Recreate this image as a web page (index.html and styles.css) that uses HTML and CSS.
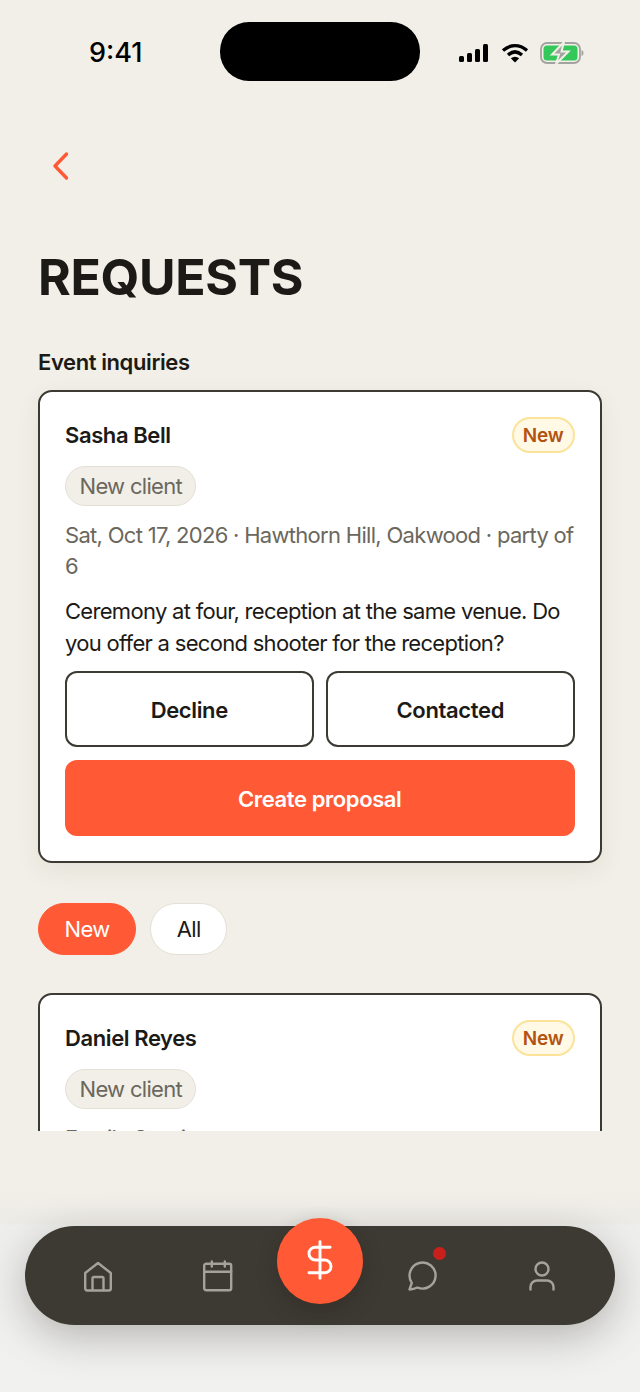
FILE: index.html
```html
<!DOCTYPE html>
<html lang="en">
<head>
<meta charset="utf-8">
<title>Requests</title>
<link rel="stylesheet" href="styles.css">
</head>
<body>
<div class="screen">
  <header class="status">
    <span class="time">9:41</span>
    <span class="island"></span>
    <span class="status-icons">
      <svg width="32" height="20" viewBox="0 0 32 20"><rect x="1" y="13" width="5" height="6" rx="1.5"/><rect x="9" y="10" width="5" height="9" rx="1.5"/><rect x="17" y="6" width="5" height="13" rx="1.5"/><rect x="25" y="1" width="5" height="18" rx="1.5"/></svg>
      <svg width="28" height="20" viewBox="0 0 28 20" fill="none" stroke="#000" stroke-width="3.4"><path d="M2 7.5C9.500 1 18.500 1 26 7.5"/><path d="M7 12C11.500 8 16.500 8 21 12"/><path d="M14 19.500L9.800 15.200C12.500 13.200 15.500 13.200 18.200 15.200Z" fill="#000" stroke="none"/></svg>
      <svg width="44" height="22" viewBox="0 0 44 22"><rect x="1" y="1" width="39" height="20" rx="6" fill="none" stroke="#a3a3a0" stroke-width="1.8"/><rect x="3.500" y="3.500" width="34" height="15" rx="3.500" fill="#34c759"/><path d="M41.500 8v6c1.500-.5 2-1.800 2-3s-.5-2.500-2-3z" fill="#a3a3a0"/><path d="M24 0L12 12.500H19L16 22L28.500 9.500H21.500Z" fill="#a3a3a0" stroke="#f2efe8" stroke-width="2"/></svg>
    </span>
  </header>

  <a class="back" href="#" aria-label="Back">
    <svg width="20" height="30" viewBox="0 0 20 30" fill="none" stroke="#ff5a35" stroke-width="3.4" stroke-linecap="round" stroke-linejoin="round"><path d="M15.500 3L4 15l11.500 12"/></svg>
  </a>

  <main class="content">
    <h1 class="title">REQUESTS</h1>
    <h2 class="section">Event inquiries</h2>

    <article class="card card-main">
      <div class="card-head">
        <span class="name">Sasha Bell</span>
        <span class="badge">New</span>
      </div>
      <span class="tag">New client</span>
      <p class="meta">Sat, Oct 17, 2026 · Hawthorn Hill, Oakwood · party of 6</p>
      <p class="message">Ceremony at four, reception at the same venue. Do you offer a second shooter for the reception?</p>
      <div class="actions">
        <button class="btn">Decline</button>
        <button class="btn">Contacted</button>
      </div>
      <button class="primary">Create proposal</button>
    </article>

    <div class="filters">
      <button class="chip chip-on">New</button>
      <button class="chip">All</button>
    </div>

    <div class="clip">
      <article class="card">
        <div class="card-head">
          <span class="name">Daniel Reyes</span>
          <span class="badge">New</span>
        </div>
        <span class="tag">New client</span>
        <p class="meta">Family Session</p>
      </article>
    </div>
  </main>

  <div class="fade"></div>
  <nav class="tabbar">
    <div class="tab-group">
      <svg class="tab" width="34" height="34" viewBox="0 0 34 34" fill="none" stroke="#a5a29b" stroke-width="2.4" stroke-linejoin="round"><path d="M4.200 13.500L17 3.500 29.800 13.500V29a2 2 0 0 1-2 2H6.200a2 2 0 0 1-2-2Z" transform="translate(0 .5)"/><path d="M11.500 31V19.500a1.500 1.500 0 0 1 1.500-1.500H21a1.500 1.500 0 0 1 1.500 1.500V31"/></svg>
      <svg class="tab" width="34" height="34" viewBox="0 0 34 34" fill="none" stroke="#a5a29b" stroke-width="2.4" stroke-linecap="round" stroke-linejoin="round"><rect x="3.200" y="4.800" width="27" height="26.500" rx="2"/><path d="M3.200 12.800H30.200M10.800 2.500V7.500M23.800 2.500V7.500"/></svg>
    </div>
    <div class="tab-group tab-group-right">
      <span class="tab chat">
        <svg width="34" height="34" viewBox="0 0 34 34" fill="none" stroke="#a5a29b" stroke-width="2.4" stroke-linecap="round" stroke-linejoin="round"><path d="M3.500 30.500L5.800 23.800A13 13 0 1 1 11.500 28.500C8.500 29.800 6 30.300 3.500 30.500Z"/></svg>
        <span class="dot"></span>
      </span>
      <svg class="tab" width="34" height="34" viewBox="0 0 34 34" fill="none" stroke="#a5a29b" stroke-width="2.4" stroke-linecap="round"><circle cx="17" cy="10" r="6.500"/><path d="M5.500 30.500V28A6.500 6.500 0 0 1 12 21.500H22A6.500 6.500 0 0 1 28.500 28V30.500"/></svg>
    </div>
  </nav>
  <button class="fab" aria-label="Payments">
    <svg width="44" height="44" viewBox="0 0 24 24" fill="none" stroke="#fff" stroke-width="1.6" stroke-linecap="round" stroke-linejoin="round"><path d="M12 2V22"/><path d="M17.500 5H9.500a3.500 3.500 0 0 0 0 7h5a3.500 3.500 0 0 1 0 7H6"/></svg>
  </button>
</div>
</body>
</html>
```

FILE: styles.css
```css
* { box-sizing: border-box; }
html, body { margin: 0; padding: 0; }
body { font-family: Inter, "Liberation Sans", sans-serif; background: #f2efe8; color: #1c1a16; }
button { font-family: inherit; cursor: pointer; }
p, h1, h2 { margin: 0; }

.screen { position: relative; width: 640px; height: 1392px; overflow: hidden; background: #f2efe8; }

.status { position: relative; height: 81px; padding-top: 22px; }
.time { position: absolute; left: 89px; top: 36px; font-size: 27px; line-height: 34px; font-weight: 500; color: #000; }
.island { position: absolute; left: 220px; top: 22px; width: 200px; height: 59px; border-radius: 29px; background: #000; }
.status-icons { position: absolute; left: 458px; top: 42px; display: flex; align-items: center; gap: 11px; }
.status-icons svg { display: block; }

.back { display: block; width: 20px; height: 30px; margin: 70px 0 0 51px; }
.back svg { display: block; }

.content { padding: 0 38px; }
.title { margin-top: 67px; font-size: 50px; line-height: 58px; font-weight: 700; letter-spacing: -0.35px; color: #1c1a16; }
.section { margin-top: 41px; font-size: 22px; line-height: 30px; font-weight: 600; letter-spacing: -0.4px; }

.card { background: #fff; border: 2px solid #3d3a33; border-radius: 14px; padding: 25px 25.5px 25px 25px; }
.card-main { margin-top: 13px; height: 473px; box-shadow: 0 8px 24px rgba(60, 50, 30, 0.07); }
.card-head { display: flex; justify-content: space-between; align-items: center; height: 36px; }
.name { font-size: 22px; font-weight: 600; letter-spacing: -0.4px; }
.badge { font-size: 19px; line-height: 32px; padding: 1px 9px 0; height: 36px; font-weight: 600; border-radius: 18px; color: #b4530f; background: #fff9e6; border: 2px solid #fce39a; letter-spacing: -0.2px; }
.tag { display: inline-block; margin-top: 13px; padding: 0 13.5px; font-size: 22px; line-height: 38px; color: #6b675c; background: #f2efe8; border: 1px solid #e4e0d5; border-radius: 20px; letter-spacing: -0.7px; }
.meta { margin-top: 14px; font-size: 22px; line-height: 31px; color: #6b675c; letter-spacing: -0.7px; }
.message { margin-top: 13px; font-size: 22px; line-height: 32px; color: #1c1a16; letter-spacing: -0.7px; }
.actions { display: grid; grid-template-columns: 1fr 1fr; gap: 12.5px; margin-top: 12px; }
.btn { height: 76px; padding: 2px 0 0; font-size: 22px; font-weight: 600; letter-spacing: -0.35px; color: #1c1a16; background: #fff; border: 2px solid #3d3a33; border-radius: 12px; }
.primary { display: block; width: 100%; height: 76px; margin-top: 13px; padding: 2px 0 0; font-size: 22px; font-weight: 600; letter-spacing: -0.4px; color: #fff; background: #ff5a35; border: 0; border-radius: 12px; }

.filters { display: flex; gap: 14px; margin-top: 40px; }
.chip { height: 52px; padding: 0 25.5px; font-size: 22px; letter-spacing: -0.6px; color: #1c1a16; background: #fff; border: 1px solid #e4e0d5; border-radius: 26px; }
.chip-on { color: #fff; background: #ff5a35; border-color: #ff5a35; }

.clip { height: 138px; margin-top: 38px; overflow: hidden; }

.fade { position: absolute; left: 0; right: 0; top: 1190px; height: 202px; background: linear-gradient(to bottom, rgba(236, 234, 228, 0), #ecebe6 32px, #eeeeed 36px, #f1f1f0 100%); }
.tabbar { position: absolute; left: 25px; top: 1226px; width: 590px; height: 99px; display: flex; justify-content: space-between; align-items: center; padding: 0 56px; border-radius: 50px; background: #3d3a33; box-shadow: 0 12px 40px rgba(30, 25, 15, 0.27); }
.tab-group { display: flex; gap: 86px; }
.tab-group-right { gap: 85px; }
.tab { display: block; flex: none; }
.chat { position: relative; width: 34px; height: 34px; }
.chat svg { display: block; }
.dot { position: absolute; left: 27px; top: -12px; width: 13px; height: 13px; border-radius: 50%; background: #c9201c; }
.fab { position: absolute; left: 277px; top: 1218px; display: flex; align-items: center; justify-content: center; width: 86px; height: 86px; padding: 0 0 2px; background: #ff5a35; border: 0; border-radius: 50%; box-shadow: 0 8px 20px rgba(30, 25, 15, 0.25); }
```
